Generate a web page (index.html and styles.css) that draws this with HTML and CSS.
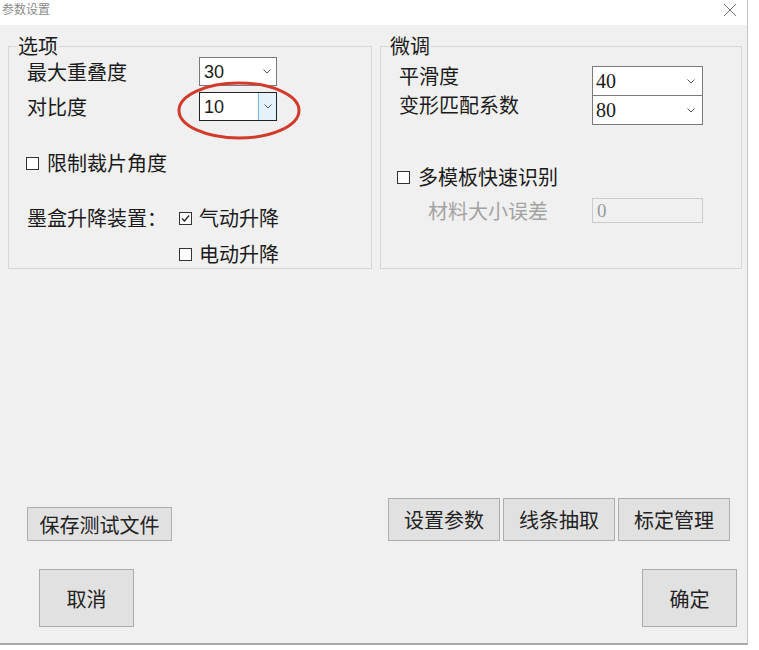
FILE: index.html
```html
<!DOCTYPE html>
<html>
<head>
  <meta charset="utf-8">
  <title>参数设置</title>
  <link rel="stylesheet" href="styles.css">
</head>
<body>
  <!-- dialog window -->
  <div class="window">
    <div class="titlebar">
      <span class="title">参数设置</span>
      <svg class="close" width="14" height="14" viewBox="0 0 14 14">
        <path d="M1 1 L13 13 M13 1 L1 13" stroke="#777" stroke-width="1" fill="none"/>
      </svg>
    </div>

    <div class="client">
      <div class="groups">
        <!-- left group -->
        <fieldset class="group options">
          <legend>选项</legend>
          <div class="row first">
            <span class="label">最大重叠度</span>
            <div class="combo">
              <span class="value">30</span>
              <span class="arrow"><svg width="8" height="5" viewBox="0 0 8 5"><path d="M0.5 0.5 L4 4 L7.5 0.5" stroke="#555" fill="none"/></svg></span>
            </div>
          </div>
          <div class="row second">
            <span class="label">对比度</span>
            <div class="combo focused">
              <span class="value">10</span>
              <span class="arrow"><svg width="8" height="5" viewBox="0 0 8 5"><path d="M0.5 0.5 L4 4 L7.5 0.5" stroke="#555" fill="none"/></svg></span>
              <svg class="mark" width="124" height="59" viewBox="0 0 124 59">
                <ellipse cx="62" cy="29.5" rx="60" ry="27.5" fill="none" stroke="#d23b2c" stroke-width="3"/>
              </svg>
            </div>
          </div>
          <label class="check limit"><span class="box"></span>限制裁片角度</label>
          <div class="lift">
            <span class="lift-label">墨盒升降装置：</span>
            <label class="check"><span class="box checked"><svg width="11" height="11" viewBox="0 0 11 11"><path d="M2 5.5 L4.5 8 L9 2.5" stroke="#222" stroke-width="1.3" fill="none"/></svg></span>气动升降</label>
          </div>
          <label class="check electric"><span class="box"></span>电动升降</label>
        </fieldset>

        <!-- right group -->
        <fieldset class="group tune">
          <legend>微调</legend>
          <div class="row first">
            <span class="label">平滑度</span>
            <div class="combo wide">
              <span class="value">40</span>
              <span class="arrow"><svg width="8" height="5" viewBox="0 0 8 5"><path d="M0.5 0.5 L4 4 L7.5 0.5" stroke="#555" fill="none"/></svg></span>
            </div>
          </div>
          <div class="row stacked">
            <span class="label">变形匹配系数</span>
            <div class="combo wide">
              <span class="value">80</span>
              <span class="arrow"><svg width="8" height="5" viewBox="0 0 8 5"><path d="M0.5 0.5 L4 4 L7.5 0.5" stroke="#555" fill="none"/></svg></span>
            </div>
          </div>
          <label class="check multi"><span class="box"></span>多模板快速识别</label>
          <div class="row disabled">
            <span class="label">材料大小误差</span>
            <div class="field">0</div>
          </div>
        </fieldset>
      </div>

      <div class="tools">
        <button class="btn save">保存测试文件</button>
        <div class="tool-group">
          <button class="btn tool">设置参数</button>
          <button class="btn tool">线条抽取</button>
          <button class="btn tool">标定管理</button>
        </div>
      </div>

      <div class="actions">
        <button class="btn big cancel">取消</button>
        <button class="btn big ok">确定</button>
      </div>
    </div>
  </div>
</body>
</html>
```

FILE: styles.css
```css
* { box-sizing: border-box }

body {
  margin: 0;
  background: #fff;
  font-family: "Noto Sans CJK SC", "Noto Sans", sans-serif;
  color: #1a1a1a;
}

/* window frame */
.window {
  width: 748px;
  height: 645px;
  display: flex;
  flex-direction: column;
  border-right: 1px solid #c4c4c4;
  border-bottom: 2px solid #a9a9a9;
}

.titlebar {
  height: 25px;
  background: #fff;
  display: flex;
  align-items: flex-start;
  justify-content: space-between;
  padding: 1px 10px 0 2px;
}

.title {
  font-size: 12px;
  line-height: 16px;
  color: #8a8a8a;
}

.close {
  margin-top: 2px;
}

.client {
  flex: 1;
  background: #f0f0f0;
  display: flex;
  flex-direction: column;
  padding: 10px 5px 16px 8px;
}

/* group boxes */
.groups {
  display: flex;
  gap: 8px;
}

.group {
  margin: 0;
  border: 1px solid #d7d7d7;
  padding: 0 4px 0 18px;
  min-width: 0;
  font-size: 20px;
  line-height: 24px;
}

.options { width: 364px; height: 234px; }
.tune { width: 362px; height: 234px; }

.group legend {
  padding: 0 1px;
  margin-left: -10px;
  line-height: 22px;
}

.row {
  display: flex;
  align-items: center;
}

.options .label { width: 172px; }
.tune .label { width: 193px; }

.options .first { margin-top: 0; }
.options .second { margin-top: 6px; }

.tune .first { margin-top: 9px; }
.tune .stacked { margin-top: -1px; }
.tune .label { align-self: flex-start; margin-top: -2px; }

/* combo boxes */
.combo {
  position: relative;
  width: 78px;
  height: 29px;
  background: #fff;
  border: 1px solid #7a7a7a;
  display: flex;
  align-items: center;
  justify-content: space-between;
}

.combo .value {
  padding-left: 4px;
  font-family: "Liberation Sans", Arial, sans-serif;
  font-size: 18px;
  line-height: 20px;
}

.combo .arrow {
  width: 18px;
  height: 100%;
  display: flex;
  align-items: center;
  justify-content: center;
}

.combo.focused {
  border-color: #222;
}

.combo.focused .arrow {
  background: #e5f1fb;
  border-left: 1px solid #7fb6e6;
}

.combo.wide {
  width: 111px;
  height: 30px;
}

.combo.wide .value {
  font-family: "Liberation Serif", "Times New Roman", serif;
  font-size: 20px;
  padding-left: 3px;
}

.combo.wide .arrow {
  width: 22px;
}

/* red highlight ring drawn over the contrast combo */
.mark {
  position: absolute;
  left: -23px;
  top: -12px;
  pointer-events: none;
}

/* check boxes */
.check {
  display: flex;
  align-items: center;
  height: 24px;
}

.box {
  width: 13px;
  height: 13px;
  border: 1px solid #333;
  background: #fff;
  margin-right: 8px;
  display: flex;
  align-items: center;
  justify-content: center;
}

.options .limit { margin-top: 30px; margin-left: -1px; }

.lift {
  display: flex;
  align-items: center;
  margin-top: 31px;
}

.lift-label { width: 152px; }
.lift .box { margin-right: 7px; }

.options .electric { margin-top: 12px; margin-left: 152px; }
.options .electric .box { margin-right: 7px; }

.tune .multi { margin-top: 40px; margin-left: -2px; }

.disabled {
  margin-top: 9px;
  color: #a3a3a3;
}

.disabled .label {
  padding-left: 29px;
  margin-top: 0;
  align-self: center;
}

.field {
  width: 111px;
  height: 25px;
  border: 1px solid #cbcbcb;
  background: #f0f0f0;
  padding-left: 4px;
  font-family: "Liberation Serif", "Times New Roman", serif;
  font-size: 19px;
  line-height: 23px;
  color: #9a9a9a;
}

/* buttons */
.btn {
  background: #e1e1e1;
  border: 1px solid #adadad;
  font-family: "Noto Sans CJK SC", "Noto Sans", sans-serif;
  font-size: 20px;
  color: #222;
  padding: 0;
  margin: 0;
}

.tools {
  margin-top: auto;
  display: flex;
  align-items: flex-end;
  justify-content: space-between;
  padding: 0 12px 0 19px;
}

.save {
  width: 145px;
  height: 34px;
}

.tool-group {
  display: flex;
  gap: 3px;
}

.tool {
  width: 112px;
  height: 43px;
}

.actions {
  display: flex;
  justify-content: space-between;
  margin-top: 28px;
  padding: 0 5px 0 31px;
}

.big {
  width: 95px;
  height: 58px;
}
```
